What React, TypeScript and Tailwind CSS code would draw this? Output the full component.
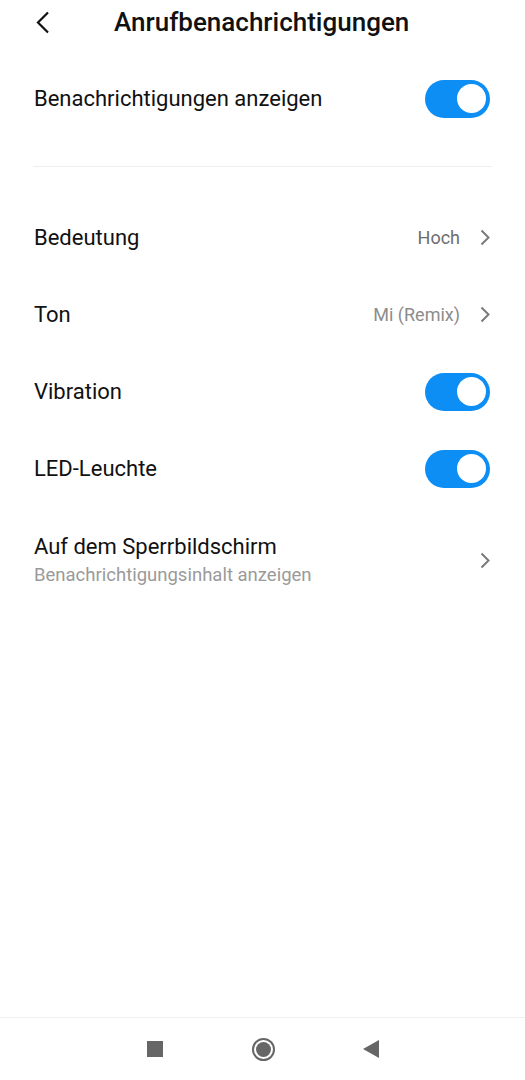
import type { ReactNode } from 'react'

function Toggle() {
  return (
    <div className="w-[65px] h-[38px] rounded-full bg-[#0d8ef5] flex items-center justify-end pr-[4px] shrink-0">
      <div className="w-[29px] h-[29px] rounded-full bg-white" />
    </div>
  )
}

function Chevron() {
  return (
    <svg width="10" height="17" viewBox="0 0 10 17" className="shrink-0">
      <path d="M1.5 1.5 L8.5 8.5 L1.5 15.5" fill="none" stroke="#7a7a7a" strokeWidth="2" />
    </svg>
  )
}

function Row({ label, sub, right }: { label: string; sub?: string; right: ReactNode }) {
  return (
    <div className={`flex items-center justify-between pl-[34px] pr-[35px] ${sub ? 'h-[106px]' : 'h-[77px]'}`}>
      <div className="flex flex-col">
        <span className="text-[22px] leading-[26px] text-[#111]">{label}</span>
        {sub && <span className="text-[18.5px] leading-[24px] mt-[3px] text-[#9a9a9a]">{sub}</span>}
      </div>
      {right}
    </div>
  )
}

export default function App() {
  return (
    <div className="h-[1080px] bg-white flex flex-col" style={{ fontFamily: 'Roboto, "Noto Sans", sans-serif' }}>
      {/* Header */}
      <div className="h-[44px] flex items-center pl-[36px]">
        <svg width="14" height="23" viewBox="0 0 14 23">
          <path d="M12 1.5 L2 11.5 L12 21.5" fill="none" stroke="#111" strokeWidth="2.2" />
        </svg>
        <h1 className="ml-[64px] text-[26px] font-medium text-[#111]">Anrufbenachrichtigungen</h1>
      </div>

      <div className="mt-[16px]">
        <Row label="Benachrichtigungen anzeigen" right={<Toggle />} />
      </div>

      <div className="mx-[33px] mt-[29px] h-px bg-[#eeeeee]" />

      <div className="mt-[32px]">
        <Row
          label="Bedeutung"
          right={
            <div className="flex items-center gap-[20px]">
              <span className="text-[18px] text-[#6e6e6e]">Hoch</span>
              <Chevron />
            </div>
          }
        />
        <Row
          label="Ton"
          right={
            <div className="flex items-center gap-[20px]">
              <span className="text-[18px] text-[#8c8c8c]">Mi (Remix)</span>
              <Chevron />
            </div>
          }
        />
        <Row label="Vibration" right={<Toggle />} />
        <Row label="LED-Leuchte" right={<Toggle />} />
        <Row label="Auf dem Sperrbildschirm" sub="Benachrichtigungsinhalt anzeigen" right={<Chevron />} />
      </div>

      <div className="flex-1" />

      {/* Navigation bar */}
      <div className="h-[63px] border-t border-[#efefef] flex items-center justify-center">
        <div className="flex items-center">
          <div className="w-[16px] h-[16px] bg-[#666]" />
          <div className="ml-[89px] w-[23px] h-[23px] rounded-full border-2 border-[#666] flex items-center justify-center">
            <div className="w-[15px] h-[15px] rounded-full bg-[#666]" />
          </div>
          <svg className="ml-[88px]" width="16" height="18" viewBox="0 0 16 18">
            <path d="M16 0 L16 18 L0 9 Z" fill="#666" />
          </svg>
        </div>
      </div>
    </div>
  )
}
